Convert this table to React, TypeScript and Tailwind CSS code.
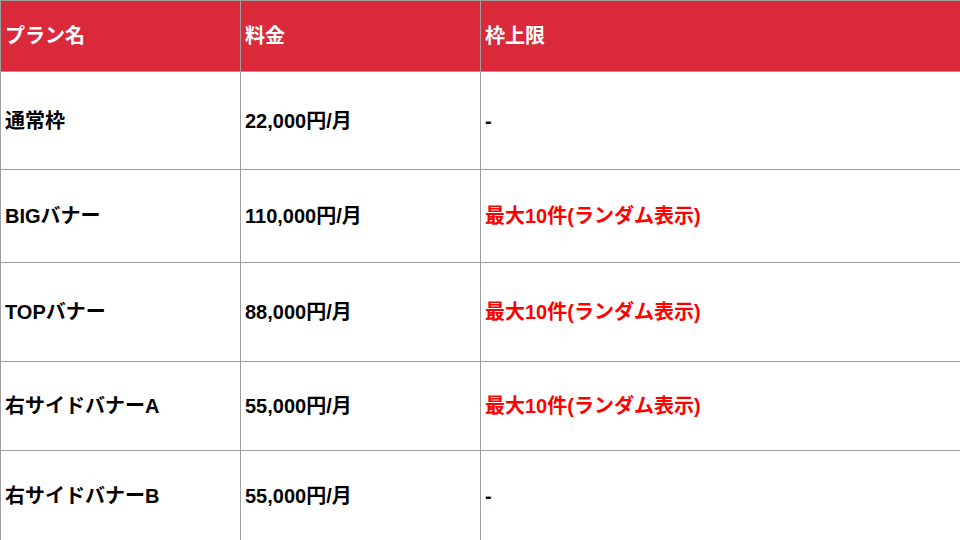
import React from "react";

const rows: { name: string; price: string; limit: string; red: boolean; h: string }[] = [
  { name: "通常枠", price: "22,000円/月", limit: "-", red: false, h: "h-[98px]" },
  { name: "BIGバナー", price: "110,000円/月", limit: "最大10件(ランダム表示)", red: true, h: "h-[93px]" },
  { name: "TOPバナー", price: "88,000円/月", limit: "最大10件(ランダム表示)", red: true, h: "h-[99px]" },
  { name: "右サイドバナーA", price: "55,000円/月", limit: "最大10件(ランダム表示)", red: true, h: "h-[89px]" },
  { name: "右サイドバナーB", price: "55,000円/月", limit: "-", red: false, h: "h-[90px]" },
];

export default function App() {
  const font = { fontFamily: '"Liberation Sans", Arial, "Noto Sans CJK JP", sans-serif' };
  return (
    <div className="w-[960px] h-[540px] overflow-hidden bg-white" style={font}>
      <table className="border-collapse w-[961px] table-fixed text-[20px] font-bold text-black">
        <colgroup>
          <col className="w-[240px]" />
          <col className="w-[240px]" />
          <col className="w-[481px]" />
        </colgroup>
        <thead>
          <tr className="h-[71px] bg-[#d9293b] text-white">
            <th className="border border-[#9e9e9e] text-left font-bold pl-[4px] align-middle">プラン名</th>
            <th className="border border-[#9e9e9e] text-left font-bold pl-[4px] align-middle">料金</th>
            <th className="border border-[#9e9e9e] text-left font-bold pl-[4px] align-middle">枠上限</th>
          </tr>
        </thead>
        <tbody>
          {rows.map((r) => (
            <tr key={r.name} className={r.h}>
              <td className="border border-[#9e9e9e] pl-[4px] align-middle">{r.name}</td>
              <td className="border border-[#9e9e9e] pl-[4px] align-middle">{r.price}</td>
              <td className={`border border-[#9e9e9e] pl-[4px] align-middle ${r.red ? "text-[#ff0000]" : "text-black"}`}>
                {r.limit}
              </td>
            </tr>
          ))}
        </tbody>
      </table>
    </div>
  );
}
